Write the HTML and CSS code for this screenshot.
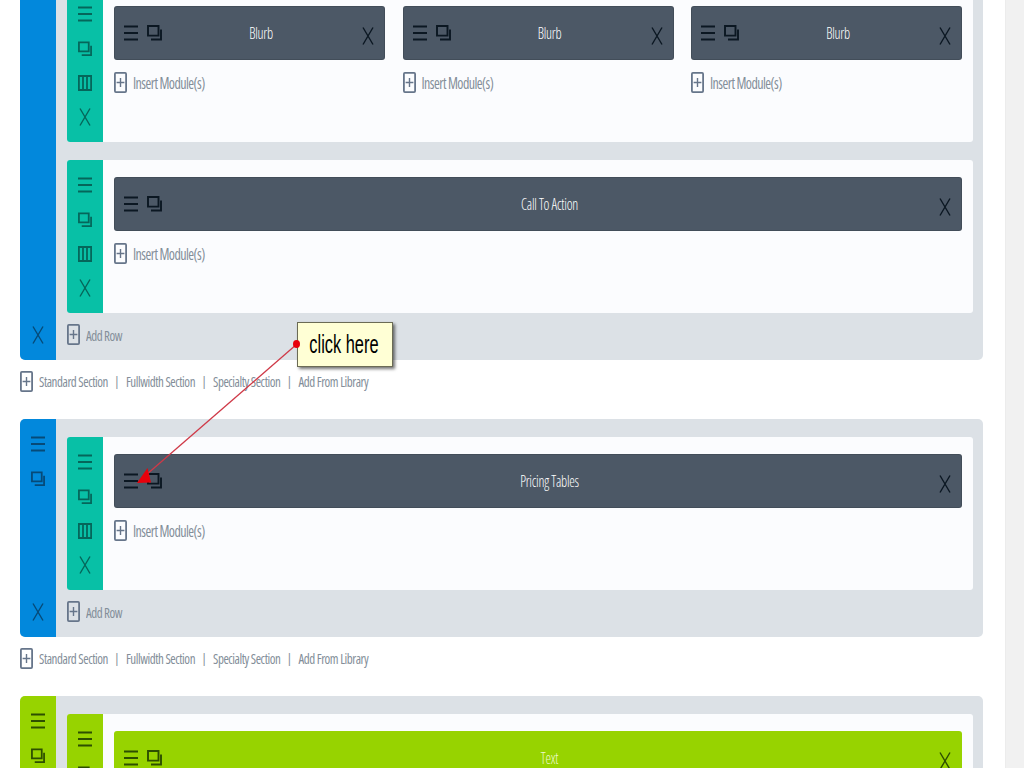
FILE: index.html
```html
<!DOCTYPE html>
<html lang="en">
<head>
  <meta charset="UTF-8">
  <title>Page Builder</title>
  <link rel="stylesheet" href="styles.css">
</head>
<body>
  <svg class="sprites" width="0" height="0">
    <symbol id="i-menu" viewBox="0 0 14 16"><path d="M0 1.5h14M0 8h14M0 14.5h14" fill="none" stroke="currentColor" stroke-width="1.8"/></symbol>
    <symbol id="i-copy" viewBox="0 0 15 16"><path d="M1 1h10.5v9.6H1zM14 4.5v10H4" fill="none" stroke="currentColor" stroke-width="1.9"/></symbol>
    <symbol id="i-cols" viewBox="0 0 14 16"><path d="M.9 1h12.2v14H.9zM5 1v14M9 1v14" fill="none" stroke="currentColor" stroke-width="1.8"/></symbol>
    <symbol id="i-x" viewBox="0 0 12 18"><path d="M1 .5l10 17M11 .5l-10 17" fill="none" stroke="currentColor" stroke-width="1.4"/></symbol>
    <symbol id="i-add" viewBox="0 0 13 21"><rect x=".9" y=".9" width="11.2" height="19.2" rx="1" fill="none" stroke="currentColor" stroke-width="1.8"/><path d="M6.5 6v9M2.6 10.5h7.8" fill="none" stroke="currentColor" stroke-width="1.4"/></symbol>
  </svg>

  <div class="page">
    <main class="builder">

      <section class="section blue">
        <div class="side">
          <div class="side-top"></div>
          <svg class="ico-x"><use href="#i-x"/></svg>
        </div>
        <div class="section-body">
          <div class="row">
            <div class="row-side">
              <svg class="ico"><use href="#i-menu"/></svg>
              <svg class="ico"><use href="#i-copy"/></svg>
              <svg class="ico"><use href="#i-cols"/></svg>
              <svg class="ico-x"><use href="#i-x"/></svg>
            </div>
            <div class="row-body cols-3">
              <div class="col">
                <div class="module"><svg class="ico"><use href="#i-menu"/></svg><svg class="ico"><use href="#i-copy"/></svg><span class="module-name">Blurb</span><svg class="ico-x"><use href="#i-x"/></svg></div>
                <div class="insert"><svg class="ico-add"><use href="#i-add"/></svg><span>Insert Module(s)</span></div>
              </div>
              <div class="col">
                <div class="module"><svg class="ico"><use href="#i-menu"/></svg><svg class="ico"><use href="#i-copy"/></svg><span class="module-name">Blurb</span><svg class="ico-x"><use href="#i-x"/></svg></div>
                <div class="insert"><svg class="ico-add"><use href="#i-add"/></svg><span>Insert Module(s)</span></div>
              </div>
              <div class="col">
                <div class="module"><svg class="ico"><use href="#i-menu"/></svg><svg class="ico"><use href="#i-copy"/></svg><span class="module-name">Blurb</span><svg class="ico-x"><use href="#i-x"/></svg></div>
                <div class="insert"><svg class="ico-add"><use href="#i-add"/></svg><span>Insert Module(s)</span></div>
              </div>
            </div>
          </div>
          <div class="row">
            <div class="row-side">
              <svg class="ico"><use href="#i-menu"/></svg>
              <svg class="ico"><use href="#i-copy"/></svg>
              <svg class="ico"><use href="#i-cols"/></svg>
              <svg class="ico-x"><use href="#i-x"/></svg>
            </div>
            <div class="row-body">
              <div class="col">
                <div class="module"><svg class="ico"><use href="#i-menu"/></svg><svg class="ico"><use href="#i-copy"/></svg><span class="module-name">Call To Action</span><svg class="ico-x"><use href="#i-x"/></svg></div>
                <div class="insert"><svg class="ico-add"><use href="#i-add"/></svg><span>Insert Module(s)</span></div>
              </div>
            </div>
          </div>
          <div class="add-row"><svg class="ico-add"><use href="#i-add"/></svg><span>Add Row</span></div>
        </div>
      </section>

      <div class="section-links">
        <svg class="ico-add"><use href="#i-add"/></svg>
        <span>Standard Section</span><i>|</i><span>Fullwidth Section</span><i>|</i><span>Specialty Section</span><i>|</i><span>Add From Library</span>
      </div>

      <section class="section blue">
        <div class="side">
          <div class="side-top">
            <svg class="ico"><use href="#i-menu"/></svg>
            <svg class="ico"><use href="#i-copy"/></svg>
          </div>
          <svg class="ico-x"><use href="#i-x"/></svg>
        </div>
        <div class="section-body">
          <div class="row">
            <div class="row-side">
              <svg class="ico"><use href="#i-menu"/></svg>
              <svg class="ico"><use href="#i-copy"/></svg>
              <svg class="ico"><use href="#i-cols"/></svg>
              <svg class="ico-x"><use href="#i-x"/></svg>
            </div>
            <div class="row-body">
              <div class="col">
                <div class="module"><svg class="ico"><use href="#i-menu"/></svg><svg class="ico"><use href="#i-copy"/></svg><span class="module-name">Pricing Tables</span><svg class="ico-x"><use href="#i-x"/></svg></div>
                <div class="insert"><svg class="ico-add"><use href="#i-add"/></svg><span>Insert Module(s)</span></div>
              </div>
            </div>
          </div>
          <div class="add-row"><svg class="ico-add"><use href="#i-add"/></svg><span>Add Row</span></div>
        </div>
      </section>

      <div class="section-links">
        <svg class="ico-add"><use href="#i-add"/></svg>
        <span>Standard Section</span><i>|</i><span>Fullwidth Section</span><i>|</i><span>Specialty Section</span><i>|</i><span>Add From Library</span>
      </div>

      <section class="section green">
        <div class="side">
          <div class="side-top">
            <svg class="ico"><use href="#i-menu"/></svg>
            <svg class="ico"><use href="#i-copy"/></svg>
          </div>
        </div>
        <div class="section-body">
          <div class="row">
            <div class="row-side">
              <svg class="ico"><use href="#i-menu"/></svg>
              <svg class="ico"><use href="#i-copy"/></svg>
            </div>
            <div class="row-body">
              <div class="col">
                <div class="module"><svg class="ico"><use href="#i-menu"/></svg><svg class="ico"><use href="#i-copy"/></svg><span class="module-name">Text</span><svg class="ico-x"><use href="#i-x"/></svg></div>
              </div>
            </div>
          </div>
        </div>
      </section>

      <!-- callout drawn over the page -->
      <div class="callout"><span>click here</span></div>
      <svg class="arrow" width="180" height="170" viewBox="130 322 180 170">
        <path d="M297 344L146 475" fill="none" stroke="#cf3a48" stroke-width="1.3"/>
        <path d="M137 483L147.500 468L151 482.500z" fill="#e8000b"/>
        <ellipse cx="296.500" cy="344" rx="3.500" ry="4" fill="#e8000b"/>
      </svg>
    </main>
    <div class="scrollbar"></div>
  </div>
</body>
</html>
```

FILE: styles.css
```css
html, body {
  margin: 0;
  height: 768px;
  overflow: hidden;
  background: #fff;
  font-family: "Open Sans", sans-serif;
}

.sprites {
  position: absolute;
}

.page {
  display: flex;
  height: 768px;
  overflow: hidden;
}

/* the page is scrolled, so the first section starts above the window */
.builder {
  position: relative;
  width: 963px;
  margin: -29px 0 0 20px;
}

.scrollbar {
  width: 19px;
  height: 768px;
  margin-left: auto;
  background: #f1f1f1;
  border-left: 1px solid #ececec;
  box-sizing: border-box;
}

/* sections */
.section {
  display: flex;
  border-radius: 5px;
  background: #dce1e6;
}
.section.blue {
  --side: #0288dc;
  --row: #08c0a6;
  --mod: #4c5866;
  --mod-text: #fff;
  --ink: #0b1722;
}
.section.green {
  --side: #97d300;
  --row: #97d300;
  --mod: #97d300;
  --mod-text: #eef9cf;
  --ink: #2d4f00;
}

.side {
  display: flex;
  flex-direction: column;
  justify-content: space-between;
  align-items: center;
  flex: 0 0 36px;
  padding: 17px 0 16px;
  box-sizing: border-box;
  background: var(--side);
  border-radius: 5px 0 0 5px;
  color: #064a78;
}
.green .side {
  color: #2d4f00;
}
.side-top {
  display: flex;
  flex-direction: column;
  align-items: center;
  gap: 19px;
}

.section-body {
  flex: 1;
  min-width: 0;
  padding: 18px 10px 0 11px;
}

/* rows */
.row {
  display: flex;
  height: 152.5px;
  background: #fbfcfe;
  border-radius: 3px;
}
.row + .row {
  margin-top: 18.5px;
}
.row-side {
  display: flex;
  flex-direction: column;
  align-items: center;
  gap: 18.5px;
  flex: 0 0 36px;
  padding-top: 17px;
  box-sizing: border-box;
  background: var(--row);
  border-radius: 3px 0 0 3px;
  color: #05665a;
}
.row-side .ico-x {
  margin-top: -2px;
}
.green .row-side {
  color: #2d4f00;
}
.row-body {
  flex: 1;
  display: grid;
  align-content: start;
  padding: 17px 11px 0;
}
.cols-3 {
  grid-template-columns: repeat(3, 271px);
  justify-content: space-between;
}

/* modules */
.module {
  display: flex;
  align-items: center;
  gap: 9px;
  height: 54px;
  padding: 0 11px 0 10px;
  box-sizing: border-box;
  position: relative;
  background: var(--mod);
  border-radius: 3px;
  color: var(--ink);
}
.blue .module {
  box-shadow: inset 0 0 0 1px rgba(0, 0, 0, 0.12);
}
.module-name {
  position: absolute;
  left: 23px;
  right: 0;
  top: 17px;
  text-align: center;
  font-size: 14px;
  font-weight: 350;
  line-height: 20px;
  font-stretch: 75%;
  letter-spacing: -0.25px;
  transform: scaleY(1.15);
  color: var(--mod-text);
}
.module .ico-x {
  margin-left: auto;
  margin-top: 5px;
}

.ico {
  display: block;
  flex: none;
  width: 14px;
  height: 16px;
}
.module .ico:nth-child(2) {
  width: 15px;
}
.ico-x {
  display: block;
  flex: none;
  width: 12px;
  height: 18px;
}
.ico-add {
  display: block;
  flex: none;
  width: 13px;
  height: 21px;
  color: #66758a;
}

.insert,
.add-row,
.section-links {
  display: flex;
  align-items: center;
  gap: 6px;
  font-stretch: 75%;
  color: #838e99;
}
.insert span,
.add-row span,
.section-links span {
  display: inline-block;
  transform: scaleY(1.12);
}
.insert {
  height: 21px;
  margin-top: 12px;
  font-size: 14px;
  letter-spacing: -0.55px;
}
.add-row {
  height: 47.5px;
  padding-bottom: 3px;
  box-sizing: border-box;
  font-size: 13px;
  letter-spacing: -0.5px;
}
.section-links {
  height: 59px;
  padding-bottom: 17px;
  box-sizing: border-box;
  gap: 0;
  font-size: 13px;
  letter-spacing: -0.45px;
}
.section-links .ico-add {
  margin-right: 6px;
}
.section-links i {
  flex: 0 0 18px;
  font-style: normal;
  text-align: center;
  letter-spacing: 0;
}

/* callout */
.callout {
  position: absolute;
  left: 277px;
  top: 351px;
  display: flex;
  align-items: center;
  justify-content: center;
  width: 96px;
  height: 45px;
  padding-right: 3px;
  box-sizing: border-box;
  background: #ffffd5;
  border: 1px solid #6b6b55;
  box-shadow: 2px 2px 3px rgba(0, 0, 0, 0.55);
  font-family: "Liberation Sans", sans-serif;
  font-size: 26px;
  color: #000;
}
.callout span {
  flex: none;
  white-space: nowrap;
  transform: scaleX(0.63);
}
.arrow {
  position: absolute;
  left: 110px;
  top: 351px;
  z-index: 2;
}
```
